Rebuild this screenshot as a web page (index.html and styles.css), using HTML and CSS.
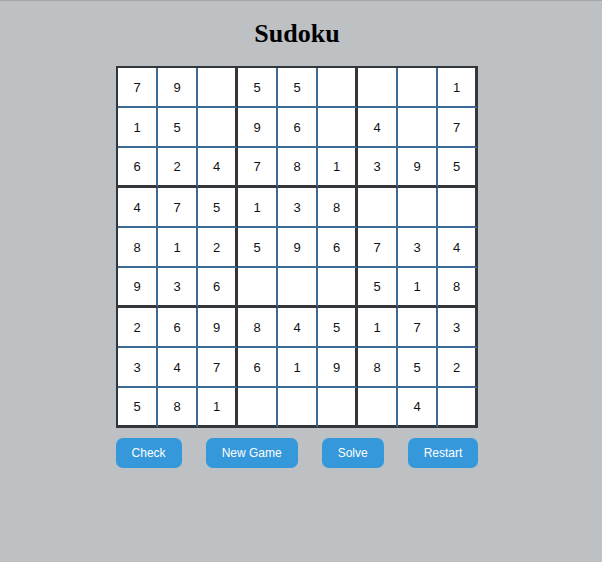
FILE: index.html
```html
<!DOCTYPE html>
<html lang="en">
<head>
<meta charset="utf-8">
<title>Sudoku</title>
<link rel="stylesheet" href="styles.css">
</head>
<body>
<div class="app">
  <h1 class="title">Sudoku</h1>
  <div class="board">
    <div class="cell">7</div><div class="cell">9</div><div class="cell br"></div><div class="cell">5</div><div class="cell">5</div><div class="cell br"></div><div class="cell"></div><div class="cell"></div><div class="cell br">1</div>
    <div class="cell">1</div><div class="cell">5</div><div class="cell br"></div><div class="cell">9</div><div class="cell">6</div><div class="cell br"></div><div class="cell">4</div><div class="cell"></div><div class="cell br">7</div>
    <div class="cell bb">6</div><div class="cell bb">2</div><div class="cell br bb">4</div><div class="cell bb">7</div><div class="cell bb">8</div><div class="cell br bb">1</div><div class="cell bb">3</div><div class="cell bb">9</div><div class="cell br bb">5</div>
    <div class="cell">4</div><div class="cell">7</div><div class="cell br">5</div><div class="cell">1</div><div class="cell">3</div><div class="cell br">8</div><div class="cell"></div><div class="cell"></div><div class="cell br"></div>
    <div class="cell">8</div><div class="cell">1</div><div class="cell br">2</div><div class="cell">5</div><div class="cell">9</div><div class="cell br">6</div><div class="cell">7</div><div class="cell">3</div><div class="cell br">4</div>
    <div class="cell bb">9</div><div class="cell bb">3</div><div class="cell br bb">6</div><div class="cell bb"></div><div class="cell bb"></div><div class="cell br bb"></div><div class="cell bb">5</div><div class="cell bb">1</div><div class="cell br bb">8</div>
    <div class="cell">2</div><div class="cell">6</div><div class="cell br">9</div><div class="cell">8</div><div class="cell">4</div><div class="cell br">5</div><div class="cell">1</div><div class="cell">7</div><div class="cell br">3</div>
    <div class="cell">3</div><div class="cell">4</div><div class="cell br">7</div><div class="cell">6</div><div class="cell">1</div><div class="cell br">9</div><div class="cell">8</div><div class="cell">5</div><div class="cell br">2</div>
    <div class="cell bb">5</div><div class="cell bb">8</div><div class="cell br bb">1</div><div class="cell bb"></div><div class="cell bb"></div><div class="cell br bb"></div><div class="cell bb"></div><div class="cell bb">4</div><div class="cell br bb"></div>
  </div>
  <div class="controls">
    <button class="btn">Check</button>
    <button class="btn">New Game</button>
    <button class="btn">Solve</button>
    <button class="btn">Restart</button>
  </div>
</div>
</body>
</html>
```
FILE: styles.css
```css
html, body {
  margin: 0;
  padding: 0;
}
body {
  background: #bdc1c4;
  border-top: 1px solid #a4a7aa;
  min-height: 561px;
  font-family: "Liberation Sans", Arial, sans-serif;
}
.app {
  width: 594px;
  display: flex;
  flex-direction: column;
  align-items: center;
}
.title {
  font-family: "Liberation Serif", "Times New Roman", serif;
  font-weight: bold;
  font-size: 26px;
  line-height: 30px;
  margin: 18px 0 17px;
  color: #000;
}
.board {
  display: grid;
  grid-template-columns: repeat(9, 40px);
  grid-template-rows: repeat(9, 40px);
  border-left: 2px solid #33363a;
  border-top: 2px solid #33363a;
  background: #fff;
}
.cell {
  box-sizing: border-box;
  background: #fff;
  border-right: 2px solid #3e6b96;
  border-bottom: 2px solid #3e6b96;
  display: flex;
  align-items: center;
  justify-content: center;
  font-size: 13px;
  color: #111;
}
.cell.br {
  border-right: 3px solid #33363a;
}
.cell.bb {
  border-bottom: 3px solid #33363a;
}
.controls {
  display: flex;
  gap: 24px;
  margin-top: 10px;
}
.btn {
  height: 30px;
  padding: 0 16px;
  border: none;
  border-radius: 7px;
  background: #3498db;
  color: #fff;
  font-family: "Liberation Sans", Arial, sans-serif;
  font-size: 12px;
  cursor: pointer;
}
```
